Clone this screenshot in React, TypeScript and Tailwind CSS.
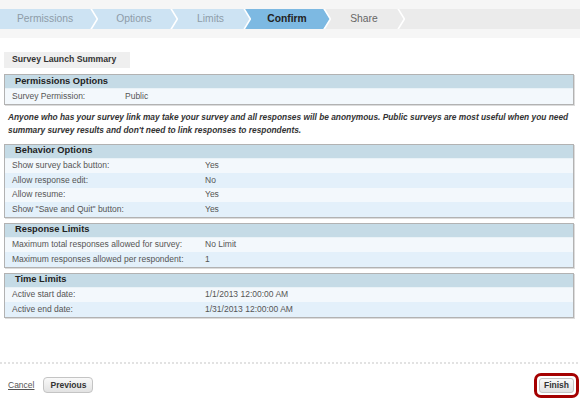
import React from "react";

type Tab = { label: string; w: number; bg: string; text: string; bold?: boolean };

const TABS: Tab[] = [
  { label: "Permissions", w: 90, bg: "#cde3f3", text: "#8d9ca8" },
  { label: "Options", w: 72, bg: "#cde3f3", text: "#8d9ca8" },
  { label: "Limits", w: 65, bg: "#cde3f3", text: "#8d9ca8" },
  { label: "Confirm", w: 72, bg: "#7db9e2", text: "#222222", bold: true },
  { label: "Share", w: 66, bg: "#ebebeb", text: "#666666" },
];

function Sep({ from, to }: { from: string; to: string }) {
  return (
    <svg width="8" height="20" viewBox="0 0 8 20" className="block shrink-0">
      <rect x="0" y="0" width="8" height="20" fill={to} />
      <polygon points="0,0 0.6,0 7.4,10 0.6,20 0,20" fill={from} />
      <polyline points="0.6,-1 7.4,10 0.6,21" fill="none" stroke="#ffffff" strokeWidth="1.6" />
    </svg>
  );
}

type Row = [string, string];

function Section({ title, rows, col }: { title: string; rows: Row[]; col: number }) {
  return (
    <div className="border border-[#b2b2b2] shadow-[1px_1px_0_#dcdcdc]">
      <div className="h-[14px] bg-[#c5dbe6] pl-[10px] flex items-center text-[9.3px] font-bold text-[#222] border-b border-[#e9f2f7]">
        {title}
      </div>
      {rows.map((r, i) => (
        <div
          key={i}
          className={`h-[14.5px] flex items-center text-[8.5px] text-[#555] ${i % 2 === 0 ? "bg-[#f3f8fc]" : "bg-[#e3f0fa]"}`}
        >
          <div className="pl-[7px] shrink-0" style={{ width: col }}>
            {r[0]}
          </div>
          <div>{r[1]}</div>
        </div>
      ))}
    </div>
  );
}

export default function App() {
  return (
    <div className="w-[580px] h-[399px] overflow-hidden bg-white font-['Liberation_Sans',Arial,sans-serif]">
      <div className="h-[38px] pt-[9px] bg-[#f6f6f6]">
        <div className="flex h-[20px]">
          {TABS.map((t, i) => {
            const next = TABS[i + 1] ? TABS[i + 1].bg : "#ebebeb";
            return (
              <React.Fragment key={t.label}>
                <div
                  className={`h-[20px] flex items-center justify-center text-[10.3px] shrink-0 ${t.bold ? "font-bold" : ""}`}
                  style={{ width: t.w, background: t.bg, color: t.text }}
                >
                  {t.label}
                </div>
                <Sep from={t.bg} to={next} />
              </React.Fragment>
            );
          })}
          <div className="flex-1 bg-[#ebebeb]" />
        </div>
      </div>

      <div className="pl-[4px] pr-[6px]">
        <div className="mt-[14px] w-[126px] h-[16px] bg-[#efefef] pl-[8px] flex items-center text-[8.7px] font-bold text-[#333]">
          Survey Launch Summary
        </div>
        <div className="mt-[6px]">
          <Section title="Permissions Options" col={120} rows={[["Survey Permission:", "Public"]]} />
        </div>
        <p className="mt-[6px] pl-[4px] text-[8.35px] leading-[13px] font-bold italic text-[#333] whitespace-nowrap">
          Anyone who has your survey link may take your survey and all responses will be anonymous. Public surveys are most useful when you need
          <br />
          summary survey results and don't need to link responses to respondents.
        </p>
        <div className="mt-[7px]">
          <Section
            title="Behavior Options"
            col={200}
            rows={[
              ["Show survey back button:", "Yes"],
              ["Allow response edit:", "No"],
              ["Allow resume:", "Yes"],
              ['Show "Save and Quit" button:', "Yes"],
            ]}
          />
        </div>
        <div className="mt-[5px]">
          <Section
            title="Response Limits"
            col={200}
            rows={[
              ["Maximum total responses allowed for survey:", "No Limit"],
              ["Maximum responses allowed per respondent:", "1"],
            ]}
          />
        </div>
        <div className="mt-[5px]">
          <Section
            title="Time Limits"
            col={200}
            rows={[
              ["Active start date:", "1/1/2013 12:00:00 AM"],
              ["Active end date:", "1/31/2013 12:00:00 AM"],
            ]}
          />
        </div>
      </div>

      <div className="mt-[44px] h-[2px] bg-[repeating-linear-gradient(90deg,#e2e2e2_0_2px,transparent_2px_4px)]" />

      <div className="mt-[9px] h-[25px] flex items-center justify-between pl-[8px] pr-[1px]">
        <div className="flex items-center gap-[9px]">
          <span className="text-[8.5px] text-[#555] underline">Cancel</span>
          <div className="w-[50px] h-[16px] rounded-[4px] border border-[#c4c4c4] bg-gradient-to-b from-[#f9f9f9] to-[#e2e2e2] flex items-center justify-center text-[8.5px] font-bold text-[#333]">
            Previous
          </div>
        </div>
        <div className="rounded-[7px] border-[3px] border-[#a40000] p-[2px]">
          <div className="w-[35px] h-[15px] rounded-[3px] border border-[#c4c4c4] bg-gradient-to-b from-[#f9f9f9] to-[#e2e2e2] flex items-center justify-center text-[8.5px] font-bold text-[#333]">
            Finish
          </div>
        </div>
      </div>
    </div>
  );
}
